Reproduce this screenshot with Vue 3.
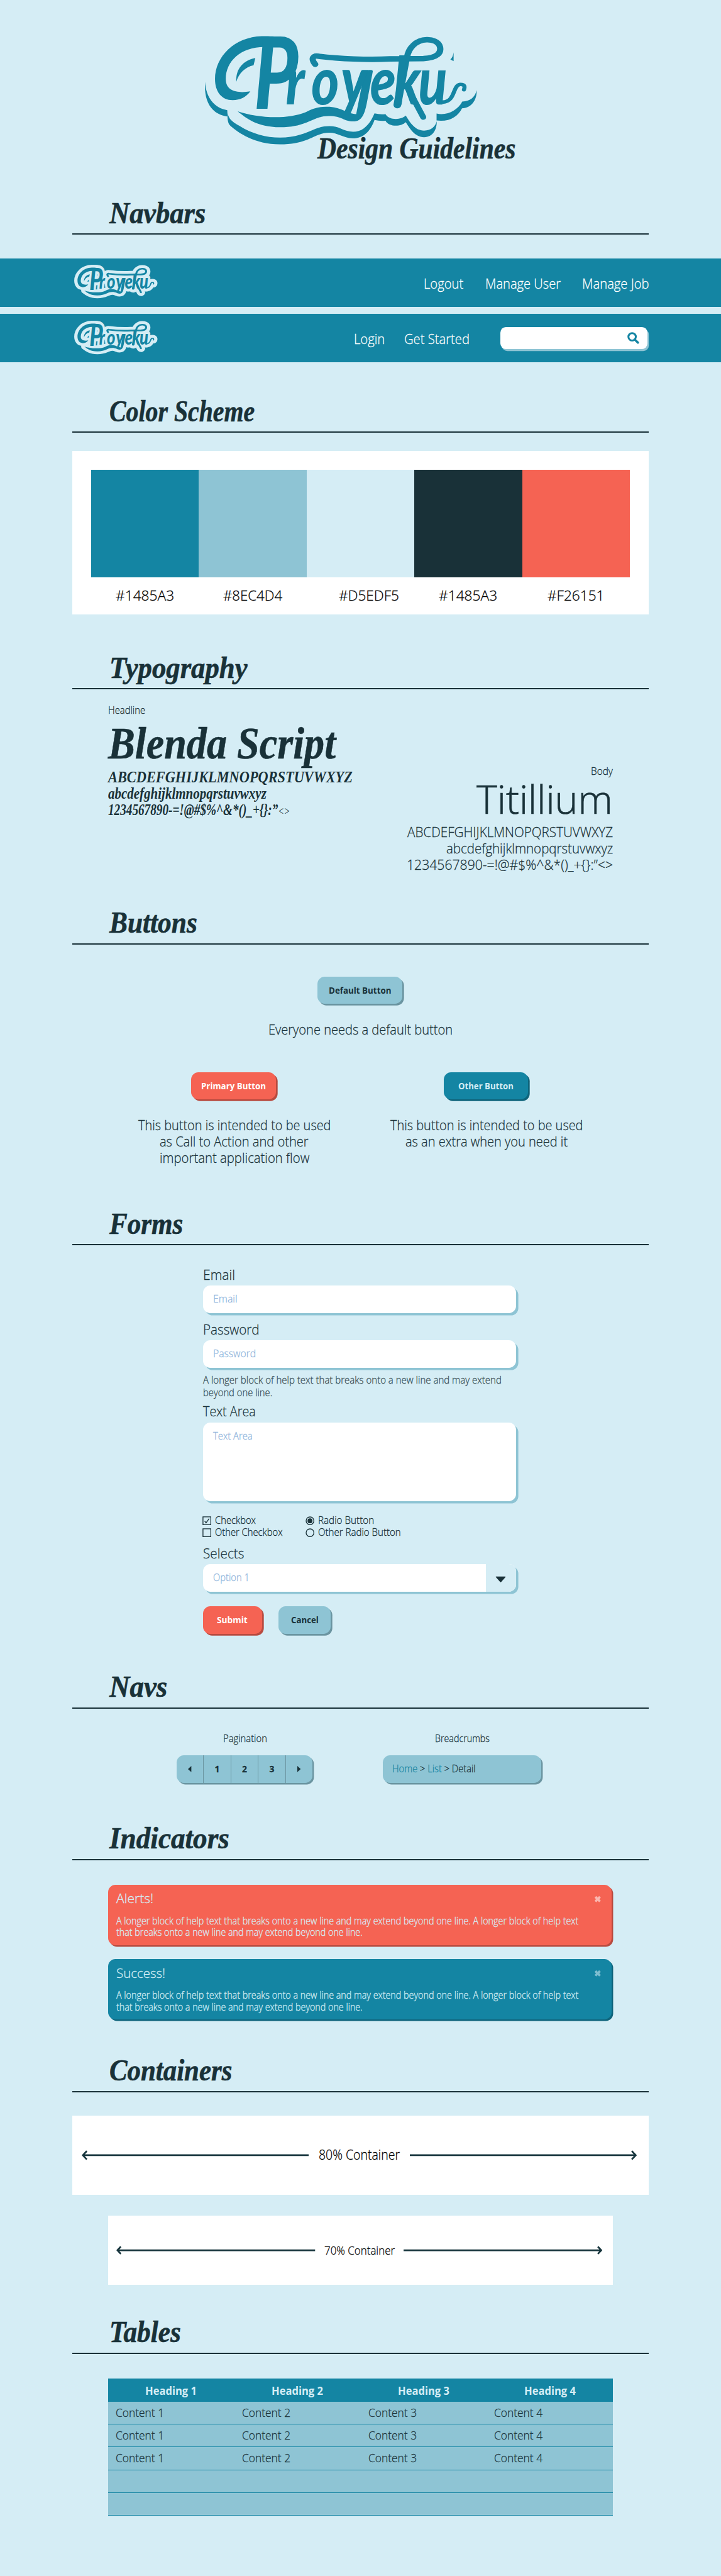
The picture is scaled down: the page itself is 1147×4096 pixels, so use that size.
<script setup>
// Sets a text's width in design pixels, keeping its layout box in step.
const vFit = {
  mounted(el, { value }) {
    const unit = el.closest('.page').getBoundingClientRect().width / 1280
    const natural = el.getBoundingClientRect().width / unit
    el.style.transform = `scaleX(${value / natural})`
    el.style.marginRight = `${value - natural}px`
  }
}

const swatches = [
  { code: '#1485A3', color: '#1485a3', w: 104 },
  { code: '#8EC4D4', color: '#8ec4d4', w: 105 },
  { code: '#D5EDF5', color: '#d5edf5', w: 107, shift: true },
  { code: '#1485A3', color: '#193138', w: 104 },
  { code: '#F26151', color: '#f56353', w: 101 }
]
const notices = [
  { kind: 'alert', title: 'Alerts!', w: 66 },
  { kind: 'success', title: 'Success!', w: 87 }
]
const noticeLines = [
  ['A longer block of help text that breaks onto a new line and may extend beyond one line. A longer block of help text', 820.5],
  ['that breaks onto a new line and may extend beyond one line.', 437]
]
const columns = [1, 2, 3, 4]
</script>

<template>
  <div class="page">
    <svg class="defs" width="0" height="0" aria-hidden="true">
      <defs>
        <g id="mark">
          <path class="solid" d="M400 76C380 72 350 72 325 72C200 76 108 180 108 300C108 370 140 413 190 413C225 413 252 396 272 366C220 375 158 372 158 300C158 200 235 122 353 130L400 122Z" />
          <path class="solid" d="M295 188C240 200 203 245 207 315C217 270 250 236 287 227Z" />
          <path class="solid" d="M213 472C300 505 435 520 530 476C575 450 600 446 640 448C700 455 720 484 763 487L800 270C803 252 842 246 840 260L812 430C802 485 790 526 750 526C705 526 700 497 635 497C560 497 540 557 410 557C300 555 255 510 213 472Z" />
          <path class="line" style="--w: 29" d="M573 222C550 190 565 172 590 179C680 192 820 200 920 193L1075 191C1140 188 1158 160 1152 130C1146 100 1115 90 1090 91C1040 93 1005 135 999 185" />
          <path class="line" style="--w: 36" d="M994 190L954 438" />
          <path class="line" style="--w: 28" d="M1003 350L1074 503" />
          <path class="line" style="--w: 19" d="M1165 423C1225 420 1210 332 1245 329C1268 328 1268 342 1263 357" />
          <text class="letters" transform="scale(.7 1)" y="458"><tspan class="cap" x="414" textLength="292" lengthAdjust="spacingAndGlyphs">P</tspan><tspan class="low" y="434" x="624 793 988 1182 1338 1502">royeku</tspan></text>
        </g>
      </defs>
    </svg>

    <header class="hero">
      <svg class="hero-logo" viewBox="0 0 1568 810" preserveAspectRatio="none">
        <g fill="#1485a3">
          <path d="M62 315C66 400 105 455 165 466L165 500C105 490 55 440 62 315Z" />
          <path d="M165 467C168 515 190 528 222 550C280 592 345 612 410 612C480 612 530 588 575 565C610 548 660 545 692 564C725 582 765 590 798 563C825 540 835 515 848 483C865 488 882 489 899 487C915 520 970 520 993 495C1012 530 1035 575 1078 575C1110 574 1130 555 1137 525C1137 570 1120 609 1078 610C1035 609 1012 565 993 530C970 556 915 556 899 522C882 524 865 523 848 518C830 575 800 616 747 616C700 614 680 586 637 586C570 586 545 648 410 648C290 648 215 585 180 550C164 535 166 500 165 467Z" />
          <path d="M1136 484C1185 497 1235 465 1255 420C1292 420 1315 395 1322 360C1324 410 1298 456 1254 456C1235 500 1195 530 1136 521Z" />
          <path d="M1215 158L1215 205L1200 196C1208 188 1213 175 1215 158Z" />
        </g>
        <use href="#mark" class="ink" />
      </svg>
      <div class="tagline script"><span v-fit="352">Design Guidelines</span></div>
    </header>

    <section>
      <h2><span v-fit="171">Navbars</span></h2>
      <div class="navbars">
        <nav class="navbar">
          <svg class="nav-logo" viewBox="0 0 1568 810" preserveAspectRatio="none">
            <use href="#mark" class="halo" /><use href="#mark" class="ink" />
          </svg>
          <span v-fit="70.5">Logout</span>
          <span v-fit="134" class="gap-a">Manage User</span>
          <span v-fit="119" class="gap-a">Manage Job</span>
        </nav>
        <nav class="navbar">
          <svg class="nav-logo" viewBox="0 0 1568 810" preserveAspectRatio="none">
            <use href="#mark" class="halo" /><use href="#mark" class="ink" />
          </svg>
          <span v-fit="55">Login</span>
          <span v-fit="116" class="gap-b">Get Started</span>
          <div class="search">
            <svg viewBox="0 0 21 21" width="21" height="21">
              <circle cx="8.5" cy="8.5" r="6.6" fill="none" stroke="#1485a3" stroke-width="3.4" />
              <path d="M13 13L18.8 18.8" stroke="#1485a3" stroke-width="4" stroke-linecap="round" />
            </svg>
          </div>
        </nav>
      </div>
    </section>

    <section>
      <h2><span v-fit="258">Color Scheme</span></h2>
      <div class="scheme">
        <div class="palette">
          <div v-for="(s, i) in swatches" :key="i" class="swatch">
            <div class="chip" :style="{ background: s.color }"></div>
            <div class="code" :class="{ shift: s.shift }"><span v-fit="s.w">{{ s.code }}</span></div>
          </div>
        </div>
      </div>
    </section>

    <section>
      <h2><span v-fit="245">Typography</span></h2>
      <div class="typography">
        <div class="face">
          <div v-fit="66" class="small tag-line">Headline</div>
          <div v-fit="404" class="script big">Blenda Script</div>
          <div v-fit="434" class="script glyphs">ABCDEFGHIJKLMNOPQRSTUVWXYZ</div>
          <div v-fit="281" class="script glyphs">abcdefghijklmnopqrstuvwxyz</div>
          <div v-fit="323" class="script glyphs">1234567890-=!@#$%^&amp;*()_+{}:”<span class="angle">&lt;&gt;</span></div>
        </div>
        <div class="face right">
          <div v-fit="39" class="small tag-line">Body</div>
          <div v-fit="242" class="titillium">Titillium</div>
          <div v-fit="365" class="body">ABCDEFGHIJKLMNOPQRSTUVWXYZ</div>
          <div v-fit="296" class="body">abcdefghijklmnopqrstuvwxyz</div>
          <div v-fit="366" class="body">1234567890-=!@#$%^&amp;*()_+{}:”&lt;&gt;</div>
        </div>
      </div>
    </section>

    <section>
      <h2><span v-fit="156">Buttons</span></h2>
      <div class="buttons">
        <div class="btn wide default"><span v-fit="111">Default Button</span></div>
        <div class="copy"><div v-fit="327" class="body">Everyone needs a default button</div></div>
        <div class="pair">
          <div class="half">
            <div class="btn wide primary"><span v-fit="115">Primary Button</span></div>
            <div class="copy">
              <div v-fit="342" class="body">This button is intended to be used</div>
              <div v-fit="264" class="body">as Call to Action and other</div>
              <div v-fit="266" class="body">important application flow</div>
            </div>
          </div>
          <div class="half">
            <div class="btn wide other"><span v-fit="98">Other Button</span></div>
            <div class="copy">
              <div v-fit="342" class="body">This button is intended to be used</div>
              <div v-fit="288" class="body">as an extra when you need it</div>
            </div>
          </div>
        </div>
      </div>
    </section>

    <section>
      <h2><span v-fit="131">Forms</span></h2>
      <form class="form">
        <label><span v-fit="57">Email</span></label>
        <div class="input small"><span v-fit="43">Email</span></div>
        <label class="next"><span v-fit="100">Password</span></label>
        <div class="input small"><span v-fit="76">Password</span></div>
        <div class="help small">
          <div v-fit="530">A longer block of help text that breaks onto a new line and may extend</div>
          <div v-fit="123">beyond one line.</div>
        </div>
        <label><span v-fit="93.5">Text Area</span></label>
        <div class="input area small"><span v-fit="70">Text Area</span></div>
        <div class="choices small">
          <div class="choice">
            <svg width="16" height="16" viewBox="0 0 16 16"><path d="M1 1H15V15H1ZM4 8.5L6.5 11.5L12 4" /></svg>
            <span v-fit="72.5">Checkbox</span>
          </div>
          <div class="choice">
            <svg width="16" height="16" viewBox="0 0 16 16"><circle cx="8" cy="8" r="6.9" /><circle class="dot" cx="8" cy="8" r="4.4" /></svg>
            <span v-fit="99.5">Radio Button</span>
          </div>
          <div class="choice">
            <svg width="16" height="16" viewBox="0 0 16 16"><path d="M1 1H15V15H1Z" /></svg>
            <span v-fit="120">Other Checkbox</span>
          </div>
          <div class="choice">
            <svg width="16" height="16" viewBox="0 0 16 16"><circle cx="8" cy="8" r="6.9" /></svg>
            <span v-fit="147">Other Radio Button</span>
          </div>
        </div>
        <label><span v-fit="73">Selects</span></label>
        <div class="input select small">
          <span v-fit="64.5">Option 1</span>
          <div class="toggle">
            <svg width="19" height="12" viewBox="0 0 19 12"><path d="M1.5 1.5H17.5L9.5 10.5Z" fill="#193138" stroke="#193138" stroke-width="1.5" stroke-linejoin="round" /></svg>
          </div>
        </div>
        <div class="actions">
          <div class="btn primary submit"><span v-fit="54.5">Submit</span></div>
          <div class="btn default cancel"><span v-fit="49">Cancel</span></div>
        </div>
      </form>
    </section>

    <section>
      <h2><span v-fit="103">Navs</span></h2>
      <div class="navs">
        <div class="pager-col">
          <div class="small tag-line"><span v-fit="78">Pagination</span></div>
          <div class="pager">
            <div><svg width="6" height="11" viewBox="0 0 6 11"><path d="M6 0V11L0 5.5Z" /></svg></div>
            <div>1</div><div>2</div><div>3</div>
            <div><svg width="6" height="11" viewBox="0 0 6 11"><path d="M0 0V11L6 5.5Z" /></svg></div>
          </div>
        </div>
        <div class="crumb-col">
          <div class="small tag-line"><span v-fit="97">Breadcrumbs</span></div>
          <div class="crumbs small">
            <span v-fit="148"><a>Home</a> &gt; <a>List</a> &gt; Detail</span>
          </div>
        </div>
      </div>
    </section>

    <section>
      <h2><span v-fit="213">Indicators</span></h2>
      <div class="indicators">
        <div v-for="n in notices" :key="n.kind" class="notice" :class="n.kind">
          <div v-fit="n.w" class="notice-title">{{ n.title }}</div>
          <div class="small">
            <div v-for="l in noticeLines" :key="l[1]" v-fit="l[1]">{{ l[0] }}</div>
          </div>
          <svg class="close" width="13" height="13" viewBox="0 0 13 13"><path d="M2.4 2.4L10.6 10.6M10.6 2.4L2.4 10.6" /></svg>
        </div>
      </div>
    </section>

    <section>
      <h2><span v-fit="218">Containers</span></h2>
      <div class="containers">
        <div class="box eighty">
          <svg width="403" height="20" viewBox="0 0 403 20"><path d="M2 10H403M9 2.5L2 10L9 17.5" /></svg>
          <span v-fit="144">80% Container</span>
          <svg width="403" height="20" viewBox="0 0 403 20"><path d="M0 10H401M394 2.5L401 10L394 17.5" /></svg>
        </div>
        <div class="box seventy">
          <svg width="353" height="18" viewBox="0 0 353 18"><path d="M2 9H353M8 2.5L2 9L8 15.5" /></svg>
          <span v-fit="125">70% Container</span>
          <svg width="353" height="18" viewBox="0 0 353 18"><path d="M0 9H351M345 2.5L351 9L345 15.5" /></svg>
        </div>
      </div>
    </section>

    <section>
      <h2><span v-fit="127">Tables</span></h2>
      <div class="tables">
        <div class="row head">
          <div v-for="c in columns" :key="c"><span v-fit="91.5">Heading {{ c }}</span></div>
        </div>
        <div v-for="r in 3" :key="r" class="row">
          <div v-for="c in columns" :key="c"><span v-fit="86">Content {{ c }}</span></div>
        </div>
        <div class="row"></div>
        <div class="row"></div>
      </div>
    </section>
  </div>
</template>

<style>
html, body { margin: 0; background: #d5edf5; overflow-x: hidden; }
</style>

<style scoped>
.page {
  zoom: 0.8961;
  width: 1280px;
  height: 4570.8px;
  overflow: hidden;
  background: #d5edf5;
  color: #193138;
  font-family: "Open Sans", "Noto Sans", sans-serif;
  font-weight: 300;
  font-size: 23.5px;
  -webkit-text-stroke-width: 0.3px;
}
.page *, .page { box-sizing: border-box; }
.defs { display: block; }
svg { display: block; flex: none; }
span, a { white-space: nowrap; }
label span, h2 span, .tagline span, .code span, .btn span, .input span, .help div, .navbar span,
.choice span, .tag-line span, .crumbs > span, .notice-title, .notice .small div, .box span, .row span,
.face > div, .copy > div {
  display: block;
  width: max-content;
  white-space: nowrap;
  transform-origin: 0 50%;
}
.small { font-size: 17.5px; }
.script, h2 { font-family: "Liberation Serif", serif; font-weight: 700; font-style: italic; -webkit-text-stroke-width: 0.7px; }
.body { line-height: 28.8px; }

.letters { font-family: Lato, sans-serif; font-weight: 900; font-style: italic; }
.cap { font-size: 530px; }
.low { font-size: 350px; }
.solid, .letters { fill: var(--c); stroke: var(--c); stroke-width: var(--o); stroke-linejoin: round; }
.line { fill: none; stroke: var(--c); stroke-width: calc((var(--w) + var(--o)) * 1px); stroke-linecap: round; stroke-linejoin: round; }
.ink { --c: #1485a3; --o: 0; }
.halo { --c: #d5edf5; --o: 100; }

.hero { height: 353.7px; padding: 40px 0 0 340px; }
.hero-logo { width: 600px; height: 270px; }
.tagline { margin: -76.5px 0 0 223px; font-size: 54px; line-height: 60px; }

h2 {
  margin: 0 128px;
  padding-left: 66px;
  height: 63px;
  border-bottom: 3px solid #193138;
  font-size: 54px;
  line-height: 48px;
}

.navbars { height: 288.2px; padding-top: 41.5px; display: flex; flex-direction: column; gap: 13px; }
.navbar { height: 86px; background: #1485a3; color: #fff; display: flex; padding: 0 128px 0 125px; line-height: 90px; }
.nav-logo { width: 183px; height: 82.4px; margin: 9.7px auto 0 0; }
.gap-a { margin-left: 38px; }
.gap-b { margin-left: 34px; }
.search {
  width: 261.5px; height: 39px; margin: 23px 2.5px 0 55px; background: #fff; border-radius: 10px;
  box-shadow: 2.5px 3.5px 0 #8ec4d4; display: flex; justify-content: flex-end; padding: 9.5px 14.5px 0 0;
}

.scheme { height: 392.7px; padding: 32px 128px 0; }
.palette { height: 290px; background: #fff; padding: 33.8px 34px 0; display: grid; grid-template-columns: repeat(5, 1fr); }
.chip { height: 191.2px; }
.code { display: flex; justify-content: center; font-size: 25px; line-height: 64.2px; color: #000; }
.code.shift { padding-left: 31px; }

.typography { height: 389.5px; padding: 25.2px 192px 0; display: flex; justify-content: space-between; }
.face { display: flex; flex-direction: column; align-items: flex-start; }
.face.right { padding-top: 108px; align-items: flex-end; }
.tag-line { line-height: 24px; }
.big { margin-top: 6.8px; margin-bottom: 5px; font-size: 80px; line-height: 80px; }
.glyphs { font-size: 27px; line-height: 29px; -webkit-text-stroke-width: 0; }
.angle { font-weight: 400; font-size: 20px; }
.titillium { margin-bottom: 8.2px; font-size: 70px; line-height: 74px; -webkit-text-stroke-width: 0.8px; }

.buttons { height: 470.6px; padding: 57px 192px 0; display: flex; flex-direction: column; align-items: center; }
.btn { height: 48.5px; border-radius: 13px; display: flex; justify-content: center; font-size: 15.5px; font-weight: 700; line-height: 49px; -webkit-text-stroke-width: 0; }
.wide { width: 150.3px; margin-right: 2.5px; }
.default { background: #8ec4d4; box-shadow: 3px 3px 0 #6b95a1; }
.primary { background: #f56353; color: #fff; box-shadow: 3px 3px 0 #b84b40; }
.other { background: #1485a3; color: #d5edf5; box-shadow: 3px 3px 0 #0f647b; }
.copy { margin-top: 31.7px; display: flex; flex-direction: column; align-items: center; }
.pair { width: 896px; margin-top: 60.7px; display: grid; grid-template-columns: 1fr 1fr; }
.half { display: flex; flex-direction: column; align-items: center; }

.form { height: 759px; padding: 38.2px 364px 0 360.3px; }
label { display: block; line-height: 30px; margin-bottom: 3.6px; }
label.next { margin-top: 14.9px; }
.input {
  height: 48.4px; background: #fff; border-radius: 13px; box-shadow: 4px 4px 0 #8ec4d4;
  padding-left: 18.5px; line-height: 48px; color: #90b5dc; display: flex;
}
.help { margin: 12px 0 8.3px; line-height: 21.6px; opacity: .85; }
.area { height: 139.6px; }
.choices { display: grid; grid-template-columns: 183.5px 1fr; margin: 24px 0 12.5px -1px; line-height: 21.2px; }
.choice { display: flex; align-items: center; gap: 6px; }
.choice svg { fill: none; stroke: #193138; stroke-width: 1.5; }
.choice .dot { fill: #193138; stroke: none; }
.select { justify-content: space-between; }
.toggle { width: 53px; background: #d5edf5; border-radius: 0 13px 13px 0; display: flex; justify-content: center; align-items: center; padding: 6px 2px 0 0; }
.actions { display: flex; gap: 30px; margin-top: 26.3px; }
.submit { width: 104.5px; }
.cancel { width: 92.4px; }

.navs { height: 205.8px; padding: 41.7px 0 0 313.5px; display: flex; gap: 124.7px; }
.pager-col { width: 241.1px; }
.crumb-col { width: 281.7px; }
.navs .tag-line { display: flex; justify-content: center; margin: 0 0 17.4px 2px; }
.pager, .crumbs { height: 48.6px; border-radius: 13px; background: #8ec4d4; box-shadow: 2.7px 2.7px 0 #6b95a1; display: flex; }
.pager div { flex: 1; display: flex; align-items: center; justify-content: center; font-size: 15.5px; font-weight: 700; border-left: 1.6px solid #6b95a1; }
.pager div:first-child { border-left: 0; }
.pager svg { fill: #193138; }
.crumbs { padding-left: 17px; line-height: 48px; }
.crumbs a { color: #1485a3; }

.indicators { height: 349.1px; padding: 44.1px 192.3px 0; display: flex; flex-direction: column; gap: 25.2px; }
.notice { position: relative; width: 893.5px; height: 106.8px; border-radius: 13px; padding: 10.3px 0 0 13.8px; color: #d5edf5; }
.alert { background: #f56353; box-shadow: 2.7px 2.7px 0 #b84b40; }
.success { background: #1485a3; box-shadow: 2.7px 2.7px 0 #0f647b; }
.notice-title { font-size: 22.4px; line-height: 30px; margin-bottom: 12.9px; }
.notice .small { line-height: 20.7px; }
.close { position: absolute; right: 18.5px; top: 19px; stroke: #fff; stroke-width: 4.2; opacity: .55; }
.success .close { stroke: #d5edf5; }

.containers { height: 401.2px; padding: 41.7px 128px 0; display: flex; flex-direction: column; align-items: center; gap: 36.7px; }
.box { background: #fff; color: #000; display: flex; align-items: center; justify-content: space-between; }
.box svg { fill: none; stroke: #17353d; stroke-width: 3; }
.eighty { width: 1024px; height: 140.6px; padding: 0 21px 0 17px; font-size: 23.5px; }
.eighty span { margin-top: -2px; }
.seventy { width: 896px; height: 123px; padding: 0 18.5px 0 15px; font-size: 20.6px; }
.seventy span { margin-top: -1px; }

.tables { padding: 44px 192px 0; }
.row { height: 40.5px; background: #8ec4d4; border-bottom: 2px solid #1485a3; display: grid; grid-template-columns: repeat(4, 224px); line-height: 38.5px; font-size: 20px; padding-left: 13.5px; }
.row.head { height: 41px; background: #1485a3; border: 0; color: #d5edf5; font-weight: 700; line-height: 44px; padding: 0; -webkit-text-stroke-width: 0; }
.row.head div { display: flex; justify-content: center; }
</style>
